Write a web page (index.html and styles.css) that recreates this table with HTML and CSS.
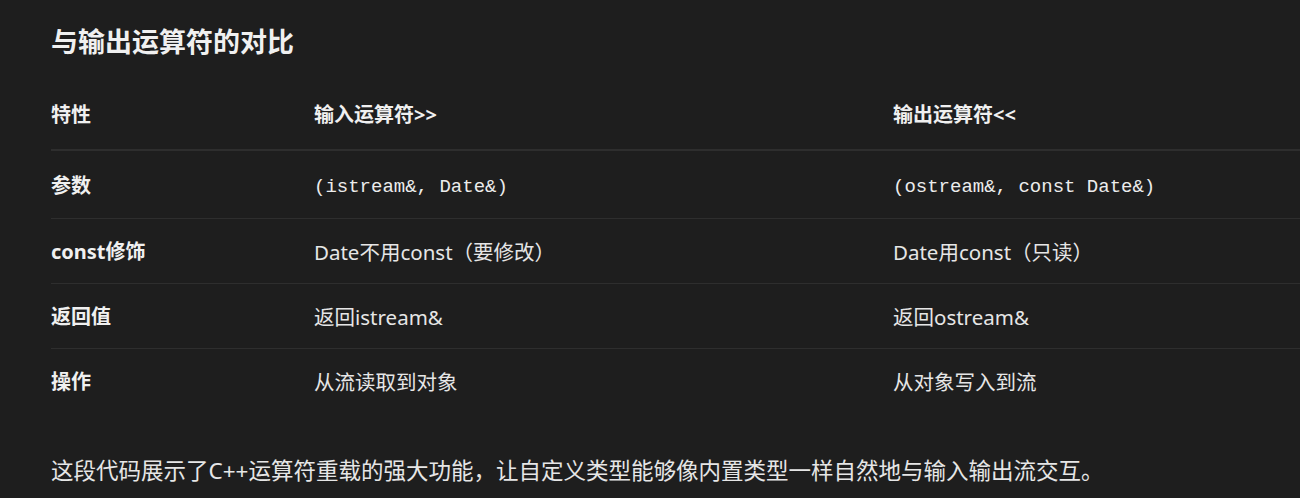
FILE: index.html
```html
<!DOCTYPE html>
<html lang="zh-CN">
  <head>
    <meta charset="UTF-8" />
    <meta name="viewport" content="width=device-width, initial-scale=1.0" />
    <title>与输出运算符的对比</title>
    <link rel="stylesheet" href="styles.css">
  </head>
  <body>
    <div class="content">
      <h3>与输出运算符的对比</h3>

      <table class="compare">
        <colgroup>
          <col class="col-feature" />
          <col class="col-input" />
          <col class="col-output" />
        </colgroup>
        <thead>
          <tr>
            <th>特性</th>
            <th>输入运算符&gt;&gt;</th>
            <th>输出运算符&lt;&lt;</th>
          </tr>
        </thead>
        <tbody>
          <tr>
            <td class="label">参数</td>
            <td><code>(istream&amp;, Date&amp;)</code></td>
            <td><code>(ostream&amp;, const Date&amp;)</code></td>
          </tr>
          <tr>
            <td class="label">const修饰</td>
            <td>Date不用const（要修改）</td>
            <td>Date用const（只读）</td>
          </tr>
          <tr>
            <td class="label">返回值</td>
            <td>返回istream&amp;</td>
            <td>返回ostream&amp;</td>
          </tr>
          <tr>
            <td class="label">操作</td>
            <td>从流读取到对象</td>
            <td>从对象写入到流</td>
          </tr>
        </tbody>
      </table>

      <p class="summary">这段代码展示了C++运算符重载的强大功能，让自定义类型能够像内置类型一样自然地与输入输出流交互。</p>
    </div>
  </body>
</html>
```

FILE: styles.css
```css
html,
body {
  overflow: hidden;
}
body {
  margin: 0;
  background-color: #1e1e1e;
  color: #e6e6e6;
  font-family: "Segoe UI", "Noto Sans", "Noto Sans CJK SC", sans-serif;
}
.content {
  padding: 24px 0 0 51px;
}
h3 {
  margin: 0;
  font-size: 27px;
  line-height: 36px;
  font-weight: bold;
  color: #f0f0f0;
}
.compare {
  margin-top: 21px;
  width: 1300px;
  border-collapse: collapse;
  table-layout: fixed;
  font-size: 20px;
}
.col-feature {
  width: 263px;
}
.col-input {
  width: 579px;
}
.compare th,
.compare td {
  text-align: left;
  padding: 17px 0;
  line-height: 30px;
  white-space: nowrap;
}
.compare td {
  padding: 18px 0 16px;
  font-size: 20.5px;
}
.compare th {
  padding: 19px 0;
  font-weight: bold;
  color: #f0f0f0;
  border-bottom: 2px solid #2e2e2e;
}
.compare tbody tr {
  border-bottom: 1px solid #2e2e2e;
}
.compare tbody tr:last-child {
  border-bottom: none;
}
.compare td.label {
  font-size: 20px;
  font-weight: bold;
  color: #f0f0f0;
}
code {
  font-family: "Liberation Mono", "DejaVu Sans Mono", monospace;
  font-size: 19px;
  color: #ececec;
}
.summary {
  margin: 41px 0 0;
  font-size: 22.5px;
  line-height: 33px;
}
```
